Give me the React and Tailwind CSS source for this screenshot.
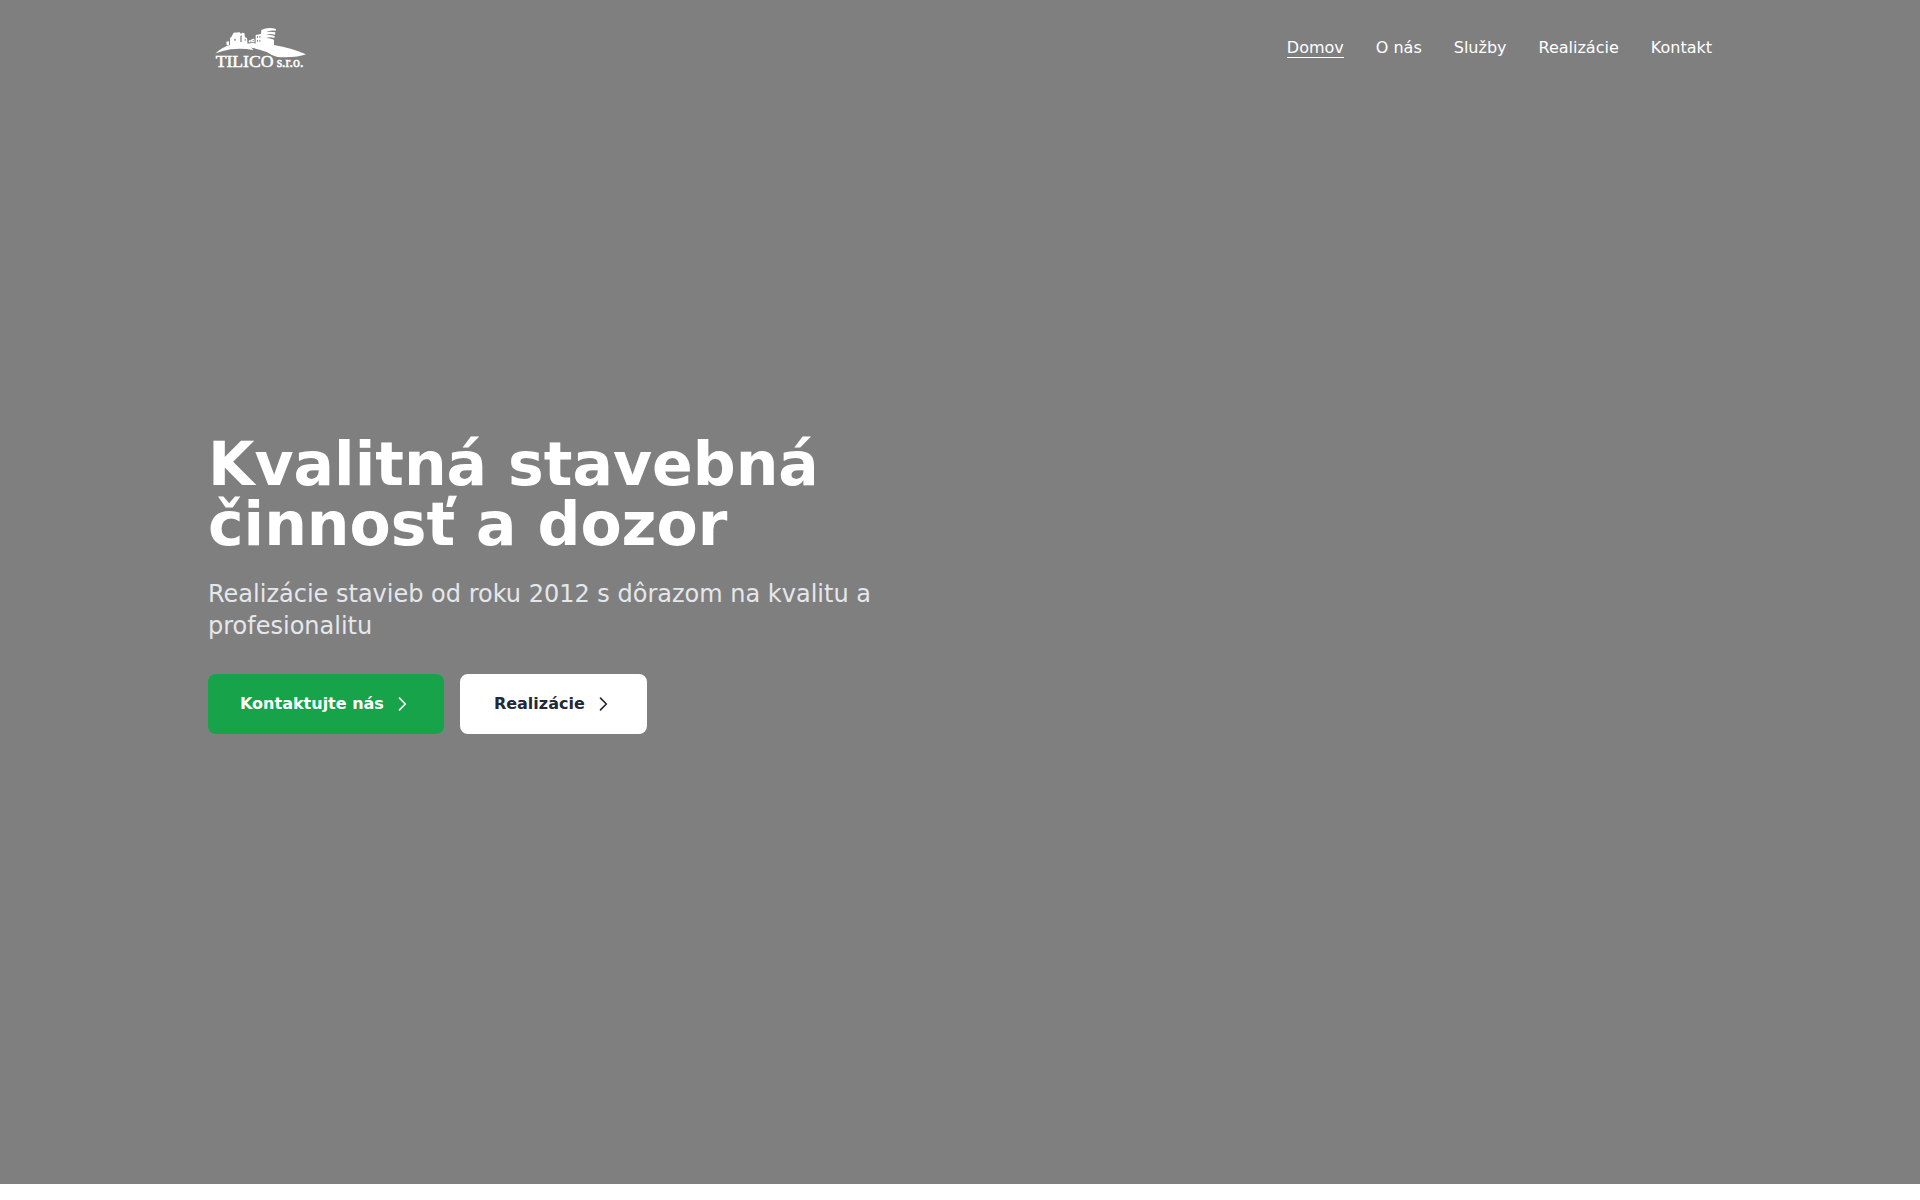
import { clsx } from "clsx";

const links = [
  { name: "Domov", href: "#domov" },
  { name: "O nás", href: "#o-nas" },
  { name: "Služby", href: "#sluzby" },
  { name: "Realizácie", href: "#realizacie" },
  { name: "Kontakt", href: "#kontakt" },
];

function Logo() {
  return (
    <svg viewBox="24 0 312 192" className="h-16 w-[104px] fill-white" role="img" aria-label="TILICO s.r.o.">
      {/* hills */}
      <path d="M47 112 Q64 94 92 86 L134 84 Q153 90 160 102 Q124 95 92 100 Q68 104 47 112Z" />
      <path d="M134 84 L158 81 L185 85 L222 87 Q275 96 318 115 Q290 126 232 123 Q214 118 200 108 Q170 96 140 93Z" />
      {/* house */}
      <path d="M90 90 L90 66 L94 63 L101 50 L119 49 L123 54 L126 50 L133 51 L135 64 L141 66 L143 88Z" />
      <path d="M79 77 L87 76 L87 88 L80 88Z" />
      <path d="M146 79 L147 73 L153 72 L156 69 L163 68 L164 79Z" />
      {/* office tower */}
      <path d="M167 84 L167 57 L183 54 L184 42 Q204 32 228 39 L227 44 Q207 42 199 48 Q212 46 226 49 L225 56 Q209 52 199 56 Q212 56 224 60 L223 66 Q209 62 199 66 Q211 66 222 71 L222 91 L188 86Z" />
      <path
        className="fill-[#808080]"
        d="M103 68h4v6h-4zM121 60l4-2v20h-4zM134 69h3v5h-3zM151 74h3v3h-3zM158 72h3v4h-3zM171 61h3v5h-3zM178 60h3v5h-3zM171 72h3v5h-3zM178 72h3v5h-3z"
      />
      <g className="stroke-white" strokeWidth="1.5" fontFamily="Liberation Serif, serif">
        <text x="47" y="152" fontSize="53">TILICO</text>
        <text x="230" y="152" fontSize="42">s.r.o.</text>
      </g>
    </svg>
  );
}

function Chevron() {
  return (
    <svg viewBox="0 0 24 24" className="ml-2 size-5" fill="none" stroke="currentColor" strokeWidth={2} aria-hidden="true">
      <path strokeLinecap="round" strokeLinejoin="round" d="M9 5l7 7-7 7" />
    </svg>
  );
}

function Header() {
  return (
    <header className="w-full">
      <div className="max-w-[1536px] mx-auto px-4 py-4 flex items-center justify-between">
        <a href="#domov">
          <Logo />
        </a>
        <nav className="flex items-center gap-8 text-white">
          {links.map((link, i) => (
            <a
              key={link.href}
              href={link.href}
              className={clsx("border-b leading-[18px]", i === 0 ? "border-white" : "border-transparent")}
            >
              {link.name}
            </a>
          ))}
        </nav>
      </div>
    </header>
  );
}

function Hero() {
  return (
    <main className="flex-1 flex items-center pb-28">
      <div className="w-full max-w-[1536px] mx-auto px-4">
        <div className="max-w-2xl">
          <h1 className="text-6xl leading-none font-bold text-white">Kvalitná stavebná činnosť a dozor</h1>
          <p className="mt-6 text-2xl text-[#e5e7eb]">
            Realizácie stavieb od roku 2012 s dôrazom na kvalitu a profesionalitu
          </p>
          <div className="mt-8 flex gap-4">
            <a
              href="#kontakt"
              className="flex items-center h-[60px] px-8 rounded-lg font-semibold bg-[#16a34a] text-white"
            >
              Kontaktujte nás
              <Chevron />
            </a>
            <a
              href="#realizacie"
              className="flex items-center h-[60px] px-8 rounded-lg font-semibold border-2 border-white bg-white text-[#1f2937]"
            >
              Realizácie
              <Chevron />
            </a>
          </div>
        </div>
      </div>
    </main>
  );
}

export default function App() {
  return (
    <div className="min-h-screen flex flex-col pb-4 bg-white font-['DejaVu_Sans',sans-serif]">
      <div className="flex-1 flex flex-col bg-[#7f7f7f]">
        <Header />
        <Hero />
      </div>
    </div>
  );
}
